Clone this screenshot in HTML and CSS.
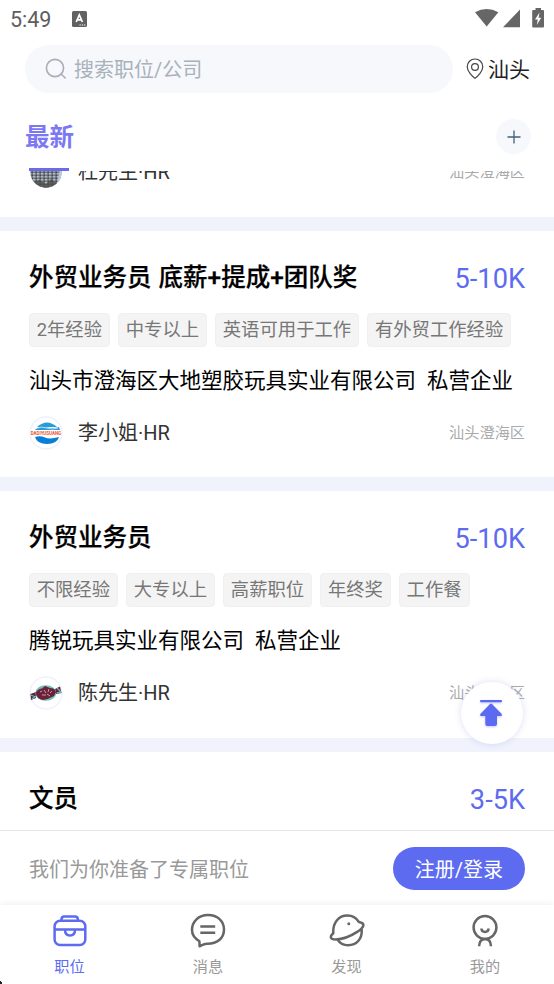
FILE: index.html
```html
<!DOCTYPE html>
<html lang="zh-CN">
<head>
<meta charset="utf-8">
<title>职位</title>
<link rel="stylesheet" href="styles.css">
</head>
<body>
<div class="app">
  <header class="status">
    <span class="clock">5:49</span>
    <svg class="status-app" width="15" height="16" viewBox="0 0 15 16"><rect width="15" height="16" rx="1.5" fill="#626262"/><path d="M4.2 11 L7.3 3.8 L10.4 11 M5.4 8.8 H9.2" fill="none" stroke="#fff" stroke-width="1.7"/><path d="M7.5 14h1.3M9.8 14h1.3M12 14h1.3" stroke="#fff" stroke-width="1.2"/></svg>
    <svg class="status-icons" width="70" height="21" viewBox="0 0 70 21"><g fill="#666"><path d="M0 4.2Q11.7 -2.4 23.4 4.2L11.7 18.5Z"/><path d="M45 1.5V19.3H28Z"/><path d="M60.5 0H66V2H68Q69 2 69 3V18.5Q69 19.5 68 19.5H58.3Q57.2 19.5 57.2 18.5V3Q57.2 2 58.3 2H60.5Z"/></g><path d="M64.5 4.5L60 11.5H62.8L61.8 17L66.2 9.8H63.6Z" fill="#fff"/></svg>
  </header>

  <div class="search-row">
    <div class="search">
      <svg width="22" height="22" viewBox="0 0 22 22" fill="none" stroke="#a9adb8" stroke-width="1.6"><circle cx="10" cy="10" r="8.6"/><path d="M16 16l4.3 4" stroke-linecap="round"/></svg>
      <span>搜索职位/公司</span>
    </div>
    <div class="city">
      <svg width="18" height="22" viewBox="0 0 18 22" fill="none" stroke="#444" stroke-width="1.2"><path d="M9 20.3C6.5 18.5 1.2 13.4 1.2 8.8A7.8 7.8 0 0 1 16.8 8.8C16.8 13.4 11.5 18.5 9 20.3Z"/><circle cx="9" cy="9" r="3.4"/></svg>
      <span>汕头</span>
    </div>
  </div>

  <div class="tabs">
    <div class="tab">最新</div>
    <div class="add"><svg width="14" height="14" viewBox="0 0 14 14" stroke="#43607a" stroke-width="1.3"><path d="M7 .5V13.5M.5 7H13.5"/></svg></div>
  </div>

  <main class="list">
    <article class="card card-partial">
      <div class="person">
        <svg class="avatar" viewBox="0 0 34 34"><defs><clipPath id="round"><circle cx="17" cy="17" r="15.7"/></clipPath><pattern id="windows" width="4" height="3" patternUnits="userSpaceOnUse"><rect width="4" height="3" fill="#757b82"/><rect width="2.2" height="1.5" fill="#b2b6b8"/><rect x="2.5" y="1.7" width="1.5" height="1.2" fill="#39434f"/></pattern></defs><g clip-path="url(#round)"><path fill="url(#windows)" d="M0 0H34V34H0Z"/><path d="M31 14H34V34H27Z" fill="#b8cbe0"/><path d="M2 27L11 25 17 29 22 24 29 29 20 34H9Z" fill="#4c4b4a" opacity=".8"/></g></svg>
        <span class="name">杜先生·HR</span><span class="area">汕头澄海区</span>
      </div>
    </article>

    <article class="card">
      <div class="head"><h2>外贸业务员 底薪+提成+团队奖</h2><span class="pay">5-10K</span></div>
      <div class="tags"><span>2年经验</span><span>中专以上</span><span>英语可用于工作</span><span>有外贸工作经验</span></div>
      <div class="company"><span>汕头市澄海区大地塑胶玩具实业有限公司</span><span>私营企业</span></div>
      <div class="person">
        <svg class="avatar" viewBox="0 0 34 34"><circle cx="17" cy="17" r="16" fill="#fff" stroke="#eff2fc" stroke-width="1.5"/><path d="M8 11Q18 2 28 11Z" fill="#299bd7"/><path d="M6 14Q9 10 16 11Q24 13 30 11L31 14H6Z" fill="#269bdc"/><path d="M7 12.4Q12 10 18 12T29 12" fill="none" stroke="#fff" stroke-width=".7"/><path d="M6 21Q11 19.5 16 21.5T30 21Q28 28 18 28Q8 28 6 21Z" fill="#087fd6"/><text class="avatar-logo" x="1.7" y="19.3" textLength="30.5" lengthAdjust="spacingAndGlyphs">DADIYUSUANG</text></svg>
        <span class="name">李小姐·HR</span><span class="area">汕头澄海区</span>
      </div>
    </article>

    <article class="card">
      <div class="head"><h2>外贸业务员</h2><span class="pay">5-10K</span></div>
      <div class="tags"><span>不限经验</span><span>大专以上</span><span>高薪职位</span><span>年终奖</span><span>工作餐</span></div>
      <div class="company"><span>腾锐玩具实业有限公司</span><span>私营企业</span></div>
      <div class="person">
        <svg class="avatar" viewBox="0 0 34 34"><circle cx="17" cy="17" r="16" fill="#fff" stroke="#eff2fc" stroke-width="1.5"/><path d="M1.5 18L7 16V22L2 24ZM26 13L31 10.5 32.5 17 27 18Z" fill="#632137"/><path d="M1.5 19l4 1.5M28 12l4 4M3 23l4-3M28 17l4-1" stroke="#68babd" stroke-width="1.3"/><ellipse cx="16.8" cy="17" rx="10.5" ry="7.7" fill="#70bfc0"/><path d="M7 16Q10 12 13 12.5L16 10 21 12Q26 12 27 16L25 20Q20 23 14 24Q8 23 7 18Z" fill="#6b2238"/><path d="M11 16l2-1M15 14l2 3M20 13l-1 3M13 19h4M18 18l3 2M21 17l2-2" stroke="#d9bcc5" stroke-width=".8"/></svg>
        <span class="name">陈先生·HR</span><span class="area">汕头澄海区</span>
      </div>
    </article>

    <article class="card">
      <div class="head"><h2>文员</h2><span class="pay">3-5K</span></div>
    </article>
  </main>

  <div class="guide"><span>我们为你准备了专属职位</span><button>注册/登录</button></div>

  <nav class="nav">
    <div class="nav-item active">
      <svg viewBox="0 0 36 36"><rect x="2.6" y="7.7" width="30.7" height="24.3" rx="5.5"/><path d="M9.5 7.5V6.3Q9.5 3.5 12.3 3.5H23Q25.8 3.5 25.8 6.3V7.5M2.6 16.4H33.3M13 16.7Q13 22.4 18 22.4T23 16.7"/></svg><span>职位</span>
    </div>
    <div class="nav-item">
      <svg viewBox="0 0 36 36"><path d="M18 2C8.5 2 2 8.5 2 17C2 22.4 4.5 25.2 9.4 28.2L9.6 33.3C12.5 31.8 14 30.7 17 30.7C27 30.9 34 25.5 34 16.5C34 8 27.5 2 18 2ZM10.3 13.4H25.2M10.3 19.8H25.2"/></svg><span>消息</span>
    </div>
    <div class="nav-item">
      <svg viewBox="0 0 36 36"><path d="M4.3 20.2C3.6 9.8 9.5 2.5 18.5 2.5C23.7 2.5 27.5 5.2 29.9 9Q34.8 10 34.3 12.5C33.8 15.3 31.4 16.8 28.2 18.9C20 24.2 11.7 26.9 4.8 26.3Q1.1 25.7 2.1 23Q2.4 21.8 4.3 20.2ZM8.4 26.3Q12 32.2 19 32.2C27.8 32.2 33.6 25.8 32.6 16"/><circle class="dot" cx="19.8" cy="10.8" r="1.5"/></svg><span>发现</span>
    </div>
    <div class="nav-item">
      <svg viewBox="0 0 36 36"><circle cx="18" cy="14.5" r="11.4"/><path d="M14.4 15.5Q14.7 19 18 19T21.6 15.5"/><path d="M12.1 33.2Q12.5 26 18.1 26T24 33.2"/></svg><span>我的</span>
    </div>
  </nav>

  <svg class="corner" width="3" height="4" viewBox="0 0 3 4"><path d="M0 1h1v1h1v2H0Z" fill="#222"/></svg>
  <div class="to-top"><svg width="24" height="30" viewBox="0 0 24 30" fill="#5c6af2"><rect x="1" y="1" width="22" height="2.2" rx="1"/><path d="M11 5Q12 4 13 5L22.5 14.7Q23.8 17 21.5 17H18V25Q18 27 16 27H8.3Q6.3 27 6.3 25V17H2.5Q.2 17 1.5 14.7Z"/></svg></div>
</div>
</body>
</html>
```

FILE: styles.css
```css
* { box-sizing: border-box; }
body { margin: 0; font-family: Roboto, "Noto Sans CJK SC", sans-serif; background: #fff; }
.app { position: relative; width: 554px; height: 984px; display: flex; flex-direction: column; overflow: hidden; white-space: nowrap; }
svg { display: block; flex: none; }

.status { height: 38px; flex: none; display: flex; align-items: center; padding: 0 9px 0 10px; }
.clock { font-size: 21.5px; line-height: 38px; padding-top: 1px; color: #5e5e5e; }
.status-app { margin-left: 21px; margin-top: -1px; }
.status-icons { margin-left: auto; margin-top: -1px; }

.search-row { height: 62px; flex: none; display: flex; padding: 7px 24px 0 25px; justify-content: space-between; }
.search { width: 428px; height: 48px; border-radius: 24px; background: #f6f8fb; display: flex; align-items: center; gap: 7px; padding-left: 20px; font-size: 20px; line-height: 48px; color: #a8b1bc; }
.search span { padding-top: 2px; }
.city { display: flex; align-items: center; height: 48px; gap: 4px; font-size: 21px; line-height: 48px; color: #222; }
.city span { padding-top: 2px; }

.tabs { height: 71px; flex: none; display: flex; justify-content: space-between; padding: 0 23px 0 25px; }
.tab { position: relative; font-size: 24.5px; line-height: 75px; height: 71px; font-weight: 700; color: #7c78f3; }
.tab::after { content: ""; position: absolute; left: 4px; bottom: 0; width: 40px; height: 3px; background: #6a6bea; }
.add { width: 35px; height: 35px; margin-top: 19px; border-radius: 50%; background: #f6f8fb; display: grid; place-items: center; }

.list { height: 659px; flex: none; overflow: hidden; background: #f0f3fc; }
.card { display: flow-root; height: 246.5px; margin-bottom: 14px; padding: 22px 29px 0; background: #fff; }
.card-partial { height: 45.7px; padding-top: 0; }
.card-partial .person { margin-top: -16px; }
.head { height: 48px; display: flex; justify-content: space-between; }
h2 { margin: 0; font-size: 24.5px; line-height: 50px; font-weight: 500; word-spacing: 1px; color: #000; -webkit-text-stroke: .25px #000; }
.pay { font-size: 27.2px; line-height: 52px; color: #5c6bf0; }
.tags { display: flex; gap: 8px; margin-top: 12px; }
.tags span { height: 34px; padding: 0 7px 0 6.7px; border: 1px solid #f0f0f0; border-radius: 4px; background: #f4f4f4; font-size: 18.35px; line-height: 32px; color: #777; }
.company { display: flex; gap: 11px; height: 34px; margin-top: 16px; font-size: 21.5px; line-height: 35px; color: #000; }
.person { display: flex; align-items: center; height: 34px; margin-top: 19px; }
.avatar { width: 34px; height: 34px; }
.avatar-logo { font: 700 5px Roboto, sans-serif; fill: #eb5630; }
.name { margin-left: 15px; font-size: 20px; line-height: 34px; color: #333; }
.area { margin-left: auto; font-size: 15.2px; line-height: 34px; color: #aaa; }

.guide { height: 75px; flex: none; border-top: 1px solid #e6e6e6; display: flex; justify-content: space-between; align-items: center; padding: 0 29px; font-size: 20px; color: #999; }
.guide button { width: 132px; height: 43px; padding: 0; border: 0; border-radius: 22px; background: #5c6bf0; color: #fff; font: inherit; }

.nav { position: relative; height: 79px; flex: none; display: grid; grid-template-columns: repeat(4, 1fr); background: #fff; box-shadow: 0 -1px 6px rgba(0,0,0,.07); }
.nav-item { display: flex; flex-direction: column; align-items: center; padding: 8px 0 0 .5px; font-size: 15.2px; line-height: 22px; color: #999; }
.nav-item svg { width: 36px; height: 36px; fill: none; stroke: #666; stroke-width: 2.5; stroke-linejoin: round; margin-bottom: 7px; }
.nav-item .dot { fill: #666; stroke: none; }
.nav-item.active { color: #5c6bf0; }
.nav-item.active svg { stroke: #5c6bf0; }

.corner { position: absolute; left: 0; bottom: 0; }
.to-top { position: absolute; left: 461px; top: 682px; width: 62px; height: 62px; border-radius: 50%; background: #fff; display: grid; place-items: center; padding: 2px 2px 0 0; box-shadow: 0 0 7px rgba(92,107,200,.22); }
.to-top svg { filter: drop-shadow(0 1px 1px rgba(92,107,240,.35)); }
```
